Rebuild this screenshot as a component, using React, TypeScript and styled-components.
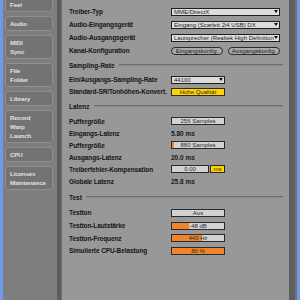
import React from 'react';
import styled, { createGlobalStyle } from 'styled-components';

const Global = createGlobalStyle`
  html, body { margin: 0; padding: 0; background: #6f9be6; }
  body { font-family: "Liberation Sans", Arial, sans-serif; }
`;

const tabs = [['', 'Feel'], ['Audio'], ['MIDI', 'Sync'], ['File', 'Folder'], ['Library'], ['Record', 'Warp', 'Launch'], ['CPU'], ['Licenses', 'Maintenance']];

export default function App() {
  return (
    <Page>
      <Global />
      <Edge />
      <Sidebar>
        <TabList>
          {tabs.map((t) => (
            <Tab key={t.join()}>
              {t.map((l, i) => (
                <TabLine key={i}>{l}</TabLine>
              ))}
            </Tab>
          ))}
        </TabList>
      </Sidebar>
      <Divider />
      <Main>
        <Group $top={5} $h={13}>
          <Label>Treiber-Typ</Label>
          <Select $w={109}>MME/DirectX</Select>
          <Label>Audio-Eingangsgerät</Label>
          <Select $w={109}>Eingang (Scarlett 2i4 USB) DX</Select>
          <Label>Audio-Ausgangsgerät</Label>
          <Select $w={109}>Lautsprecher (Realtek High Definition</Select>
          <Label>Kanal-Konfiguration</Label>
          <Buttons $gap={5}>
            <Pill>Eingangskonfig.</Pill>
            <Pill>Ausgangskonfig.</Pill>
          </Buttons>
        </Group>
        <Section $h={16.5}>
          <span>Sampling-Rate</span>
          <Line />
        </Section>
        <Group $h={12}>
          <Label>Ein/Ausgangs-Sampling-Rate</Label>
          <Select $w={54}>44100</Select>
          <Label>Standard-SR/Tonhöhen-Konvert.</Label>
          <Field $bg="#ffd200">Hohe Qualität</Field>
        </Group>
        <Section $h={17.5}>
          <span>Latenz</span>
          <Line />
        </Section>
        <Group $h={12.1}>
          <Label>Puffergröße</Label>
          <Field>256 Samples</Field>
          <Label>Eingangs-Latenz</Label>
          <Value>5.80 ms</Value>
          <Label>Puffergröße</Label>
          <Field>
            <Fill style={{ width: 2 }} />
            <FieldText>880 Samples</FieldText>
          </Field>
          <Label>Ausgangs-Latenz</Label>
          <Value>20.0 ms</Value>
          <Label>Treiberfehler-Kompensation</Label>
          <Buttons $gap={1}>
            <Field $w={38}>0.00</Field>
            <Field $w={15} $bg="#ffd200">ms</Field>
          </Buttons>
          <Label>Globale Latenz</Label>
          <Value>25.8 ms</Value>
        </Group>
        <Section $h={19}>
          <span>Test</span>
          <Line />
        </Section>
        <Group $h={12.7}>
          <Label>Testton</Label>
          <Field>Aus</Field>
          <Label>Testton-Lautstärke</Label>
          <Field>
            <Fill style={{ width: 17 }} />
            <FieldText>-48 dB</FieldText>
          </Field>
          <Label>Testton-Frequenz</Label>
          <Field>
            <Fill style={{ width: 30 }} />
            <FieldText>440 Hz</FieldText>
          </Field>
          <Label>Simulierte CPU-Belastung</Label>
          <Field $bg="#f0842c">80 %</Field>
        </Group>
      </Main>
      <RightBar />
      <Edge />
    </Page>
  );
}

const Page = styled.div`
  width: 300px;
  height: 300px;
  display: flex;
  overflow: hidden;
  background: #989898;
`;

const Edge = styled.div`
  width: 3px;
  flex: none;
  background: #6f9be6;
`;

const Sidebar = styled.div`
  width: 54px;
  flex: none;
  background: #7e7e7e;
  padding-left: 2px;
  box-sizing: border-box;
`;

const TabList = styled.div`
  display: flex;
  flex-direction: column;
  gap: 4px;
  margin-top: -12px;
`;

const Tab = styled.div`
  width: 48px;
  box-sizing: border-box;
  padding: 2px 3px 2px 4px;
  border: 1px solid #8f8f8f;
  border-radius: 3px;
  background: #737373;
  color: #e2e2e2;
  font-size: 6.2px;
  font-weight: bold;
  letter-spacing: -0.15px;
  line-height: 9px;
`;

const TabLine = styled.div`
  height: 9px;
  white-space: nowrap;
`;

const Divider = styled.div`
  width: 4px;
  flex: none;
  background: #5c5c5c;
  border-right: 1px solid #707070;
`;

const RightBar = styled.div`
  width: 6px;
  flex: none;
  background: #5e5e5e;
  border-right: 2px solid #727272;
`;

const Main = styled.div`
  flex: 1;
  padding: 0 6px 0 7px;
  display: flex;
  flex-direction: column;
`;

const Group = styled.div<{ $top?: number; $h: number }>`
  margin-top: ${(p) => p.$top ?? 0}px;
  display: grid;
  grid-template-columns: 102px 1fr;
  grid-auto-rows: ${(p) => p.$h}px;
  align-items: center;
`;

const Label = styled.div`
  font-size: 6.5px;
  font-weight: bold;
  letter-spacing: -0.1px;
  color: #151515;
  white-space: nowrap;
`;

const Section = styled.div<{ $h: number }>`
  height: ${(p) => p.$h}px;
  display: flex;
  align-items: center;
  gap: 4px;
  font-size: 6.5px;
  font-weight: bold;
  color: #151515;
`;

const Line = styled.div`
  flex: 1;
  height: 1px;
  background: #6e6e6e;
  border-bottom: 1px solid #8a8a8a;
`;

const Select = styled.div<{ $w: number }>`
  position: relative;
  width: ${(p) => p.$w}px;
  height: 8px;
  box-sizing: border-box;
  border: 1px solid #1e1e1e;
  background: #dcdcdc;
  color: #222;
  font-size: 6px;
  line-height: 6px;
  padding: 0 7px 0 2px;
  white-space: nowrap;
  overflow: hidden;
  &::after {
    content: '';
    position: absolute;
    right: 1px;
    top: 1px;
    border-left: 2.5px solid transparent;
    border-right: 2.5px solid transparent;
    border-top: 3.5px solid #111;
  }
`;

const Buttons = styled.div<{ $gap: number }>`
  display: flex;
  gap: ${(p) => p.$gap}px;
`;

const Pill = styled.div`
  width: 52px;
  height: 8px;
  box-sizing: border-box;
  border: 1px solid #2a2a2a;
  border-radius: 4px;
  background: #a9a9a9;
  color: #1a1a1a;
  font-size: 6px;
  line-height: 6px;
  text-align: center;
  white-space: nowrap;
`;

const Field = styled.div<{ $w?: number; $bg?: string }>`
  position: relative;
  width: ${(p) => p.$w ?? 54}px;
  height: 8px;
  box-sizing: border-box;
  border: 1px solid #2a2a2a;
  background: ${(p) => p.$bg ?? '#d2d2d2'};
  color: #2a2a2a;
  font-size: 6px;
  line-height: 6px;
  text-align: center;
  white-space: nowrap;
  overflow: hidden;
`;

const Fill = styled.div`
  position: absolute;
  left: 0;
  top: 0;
  bottom: 0;
  background: #f0842c;
`;

const FieldText = styled.span`
  position: relative;
`;

const Value = styled.div`
  font-size: 6.5px;
  font-weight: bold;
  color: #1a1a1a;
`;
